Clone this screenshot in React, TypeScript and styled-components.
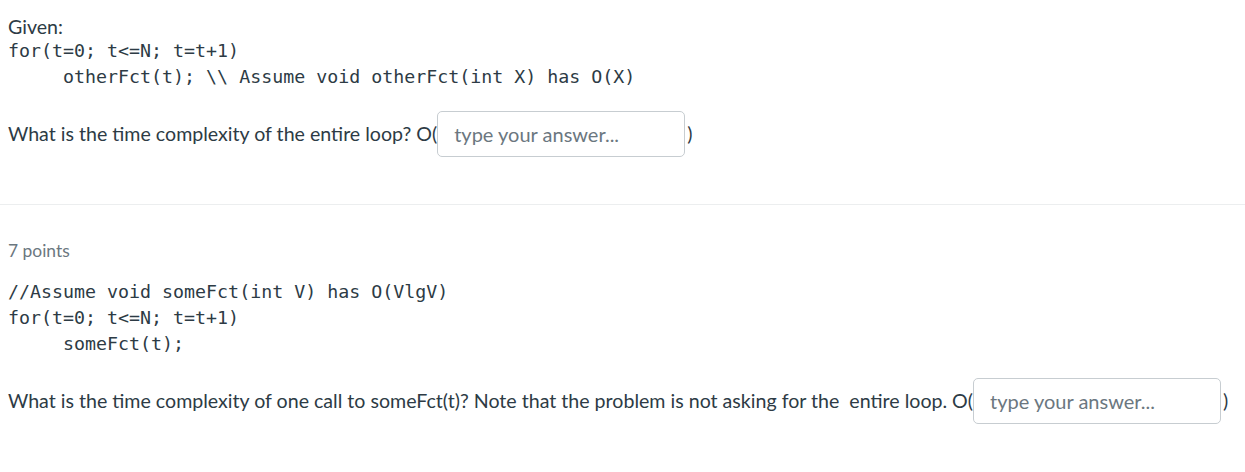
import React from "react";
import styled, { createGlobalStyle } from "styled-components";

const Global = createGlobalStyle`
  html, body { margin: 0; padding: 0; background: #ffffff; }
  body { font-family: Lato, "Noto Sans", sans-serif; color: #2d3b45; }
`;

const Page = styled.div`
  width: 1245px;
`;

const Question = styled.section<{ $top: number; $bottom: number; $divider?: boolean }>`
  padding: ${(p) => p.$top}px 8px ${(p) => p.$bottom}px 8px;
  border-top: ${(p) => (p.$divider ? "1px solid #eceeef" : "none")};
`;

const Para = styled.p`
  margin: 0;
  font-size: 19.6px;
  line-height: 24px;
  color: #2d3b45;
`;

const Points = styled.div`
  font-size: 17.4px;
  line-height: 24px;
  color: #6b7780;
`;

const Code = styled.pre<{ $gap: number }>`
  margin: ${(p) => p.$gap}px 0 0 0;
  font-family: "DejaVu Sans Mono", "Liberation Mono", monospace;
  font-size: 18.3px;
  line-height: 26px;
  color: #2d3b45;
  white-space: pre;
`;

const AnswerRow = styled.div`
  margin-top: 21px;
  display: flex;
  align-items: center;
  font-size: 19.6px;
  line-height: 24px;
  color: #2d3b45;
  white-space: pre;
`;

const Blank = styled.input`
  box-sizing: border-box;
  width: 248px;
  height: 46px;
  margin: 0 2px 0 0;
  padding: 0 16px;
  border: 1px solid #c7cdd1;
  border-radius: 5px;
  background: #fff;
  font-family: Lato, "Noto Sans", sans-serif;
  font-size: 20px;
  color: #2d3b45;
  outline: none;
  &::placeholder {
    color: #6b7780;
    opacity: 1;
  }
`;

export default function App() {
  return (
    <Page>
      <Global />
      <Question $top={15} $bottom={47}>
        <Para>Given:</Para>
        <Code $gap={-1}>{`for(t=0; t<=N; t=t+1)
     otherFct(t); \\\\ Assume void otherFct(int X) has O(X)`}</Code>
        <AnswerRow>
          <span>What is the time complexity of the entire loop? O(</span>
          <Blank placeholder="type your answer..." />
          <span>)</span>
        </AnswerRow>
      </Question>
      <Question $top={34} $bottom={48} $divider>
        <Points>7 points</Points>
        <Code $gap={16}>{`//Assume void someFct(int V) has O(VlgV)
for(t=0; t<=N; t=t+1)
     someFct(t);`}</Code>
        <AnswerRow>
          <span>What is the time complexity of one call to someFct(t)? Note that the problem is not asking for the  entire loop. O(</span>
          <Blank placeholder="type your answer..." />
          <span>)</span>
        </AnswerRow>
      </Question>
    </Page>
  );
}
